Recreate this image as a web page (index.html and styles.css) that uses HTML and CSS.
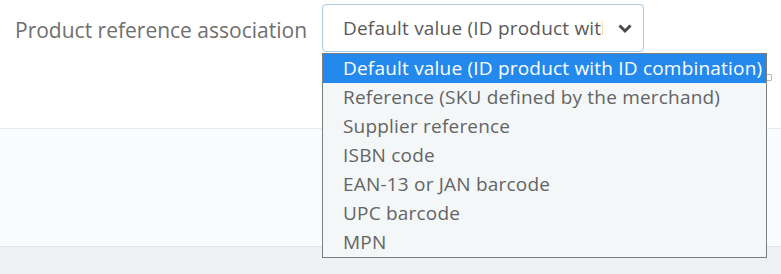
FILE: index.html
```html
<!DOCTYPE html>
<html lang="en">
<head>
  <meta charset="UTF-8">
  <title>Product reference association</title>
  <link rel="stylesheet" href="styles.css">
</head>
<body>
  <div class="panel-body">
    <div class="form-row">
      <label class="form-label">Product reference association</label>
      <div class="select-wrap">
        <div class="select-box">
          <span class="select-value">Default value (ID product with ID combination)</span>
          <svg class="chevron" width="16" height="11" viewBox="0 0 16 11">
            <path d="M2.5 2.5 L8 8 L13.5 2.5" fill="none" stroke="#4a4a4a" stroke-width="3"/>
          </svg>
        </div>
        <ul class="select-menu">
          <li class="option active">Default value (ID product with ID combination)</li>
          <li class="option">Reference (SKU defined by the merchand)</li>
          <li class="option">Supplier reference</li>
          <li class="option">ISBN code</li>
          <li class="option">EAN-13 or JAN barcode</li>
          <li class="option">UPC barcode</li>
          <li class="option">MPN</li>
        </ul>
        <span class="help-mark"></span>
      </div>
    </div>
  </div>
  <div class="panel-footer"></div>
  <div class="page-bg"></div>
</body>
</html>
```

FILE: styles.css
```css
body {
  margin: 0;
  font-family: "Open Sans", "Noto Sans", sans-serif;
  background: #eff0f2;
  color: #6c6c6c;
}

.panel-body {
  background: #fff;
  height: 128px;
  border-bottom: 1px solid #e9eaec;
}

.form-row {
  display: flex;
  align-items: center;
  padding: 4px 0 0 15px;
}

.form-label {
  width: 307px;
  font-size: 21px;
  color: #6f6f6f;
  padding-top: 3px;
}

.select-wrap {
  position: relative;
}

.select-box {
  box-sizing: border-box;
  width: 322px;
  height: 48px;
  display: flex;
  align-items: center;
  padding: 0 10px 0 20px;
  border: 1px solid #a9cbe4;
  border-radius: 4px;
  background: #fff;
}

.select-value {
  width: 260px;
  overflow: hidden;
  white-space: nowrap;
  font-size: 19px;
  letter-spacing: 0.2px;
  color: #5a5a5a;
}

.chevron {
  margin-left: auto;
  margin-right: 0;
}

.select-menu {
  position: absolute;
  top: 49px;
  left: 0;
  margin: 0;
  padding: 0;
  list-style: none;
  width: 445px;
  box-sizing: border-box;
  border: 1px solid #7d7d7d;
  background: #f4f7f8;
  z-index: 2;
}

.option {
  height: 29px;
  line-height: 28px;
  padding-left: 20px;
  font-size: 19px;
  letter-spacing: 0.2px;
  color: #646464;
  white-space: nowrap;
}

.option.active {
  background: #2489ec;
  color: #fff;
}

.help-mark {
  position: absolute;
  left: 444px;
  top: 70px;
  width: 4px;
  height: 5px;
  border: 1px solid #b9b9b9;
  border-radius: 1px;
}

.panel-footer {
  background: #fafbfc;
  height: 117px;
  border-bottom: 1px solid #e3e4e6;
}

.page-bg {
  height: 27px;
}
```
